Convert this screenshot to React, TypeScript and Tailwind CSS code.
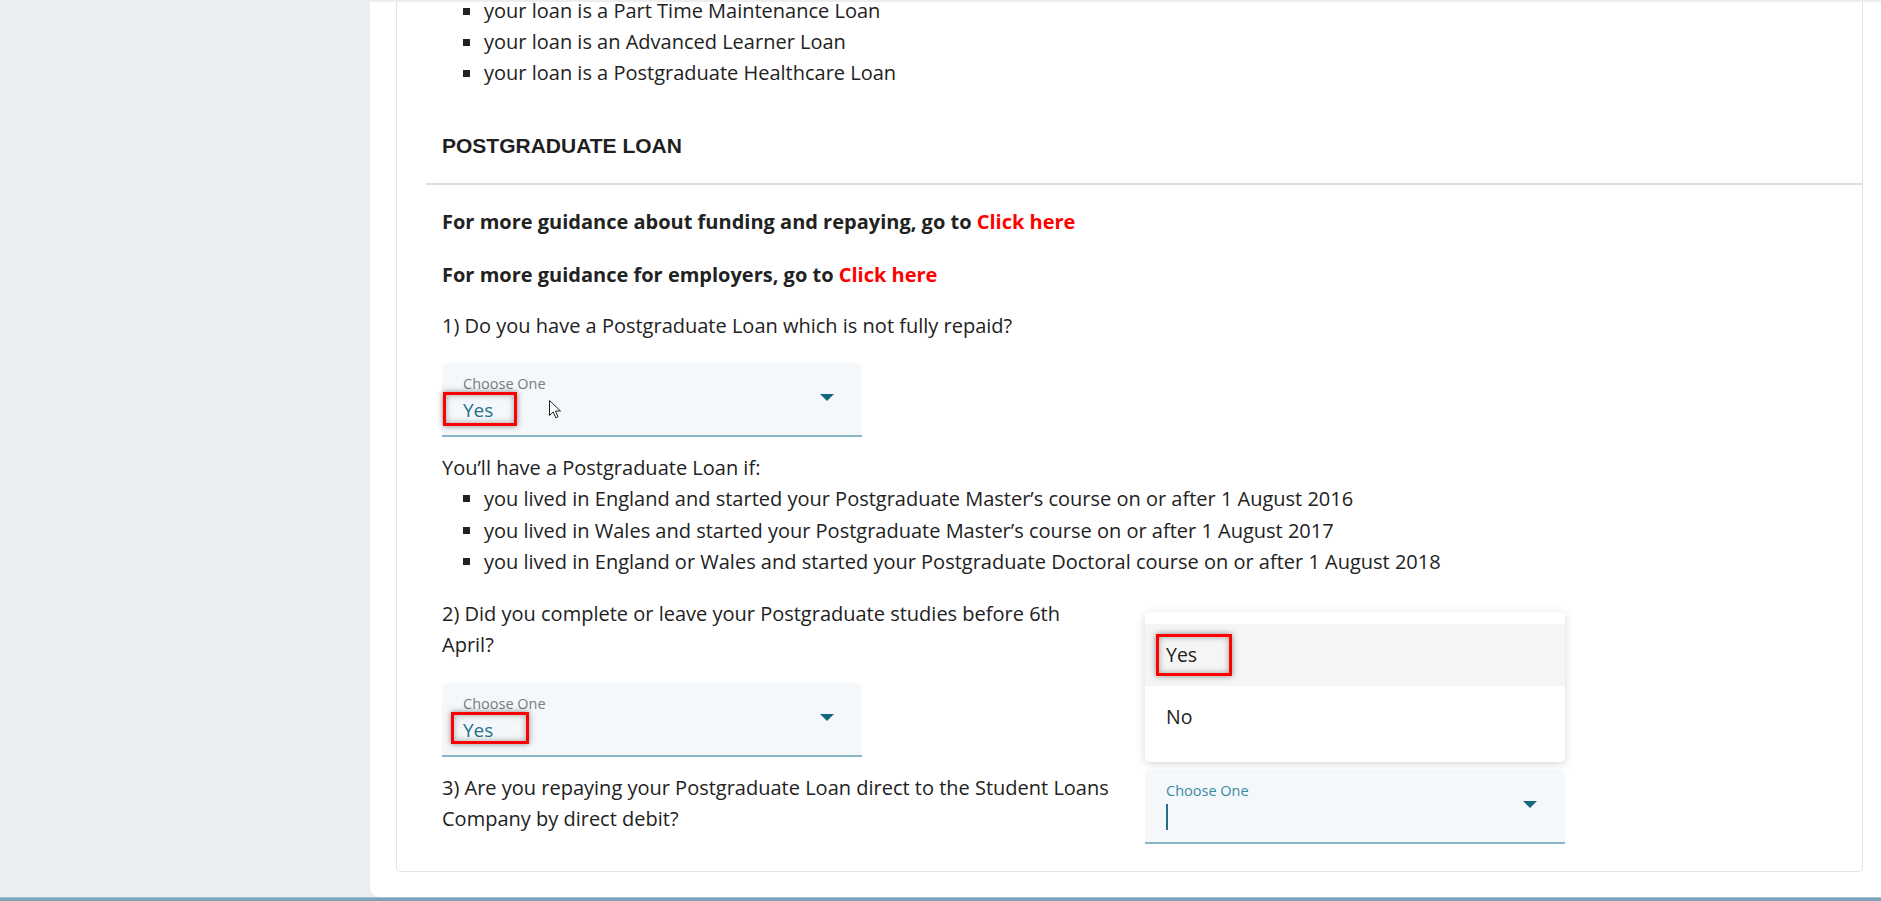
import type { ReactNode } from "react";

const TOP_BULLETS = [
  "your loan is a Part Time Maintenance Loan",
  "your loan is an Advanced Learner Loan",
  "your loan is a Postgraduate Healthcare Loan",
];

const PG_BULLETS = [
  "you lived in England and started your Postgraduate Master’s course on or after 1 August 2016",
  "you lived in Wales and started your Postgraduate Master’s course on or after 1 August 2017",
  "you lived in England or Wales and started your Postgraduate Doctoral course on or after 1 August 2018",
];

function Bullets({ items, className = "" }: { items: string[]; className?: string }) {
  return (
    <ul className={"pl-[21px] " + className}>
      {items.map((t) => (
        <li key={t} className="flex items-center gap-[14px]">
          <span className="size-[7px] shrink-0 bg-[#222]" />
          <span>{t}</span>
        </li>
      ))}
    </ul>
  );
}

// red annotation frame drawn over the screenshot
function Callout({ className }: { className: string }) {
  return (
    <span
      className={
        "pointer-events-none absolute border-[3px] border-[#ff0000] shadow-[0_0_6px_rgba(0,0,0,0.45),inset_0_0_6px_rgba(0,0,0,0.35)] " +
        className
      }
    />
  );
}

function Caret() {
  return <span className="block h-[26px] w-[1.5px] bg-[#2a6d86]" />;
}

function Select({
  value,
  focused,
  children,
}: {
  value?: string;
  focused?: boolean;
  children?: ReactNode;
}) {
  return (
    <div className="relative flex h-[74px] w-[420px] items-center rounded-t-[5px] border-b-2 border-[#86b5c6] bg-[#f4f8fb] pl-[21px] pr-[28px]">
      <div className="flex-1 self-start pt-[12px]">
        <div
          className={
            focused
              ? "text-[14.5px] leading-[18px] text-[#3a8aa2]"
              : "text-[14.5px] leading-[18px] text-[#7b7b7b]"
          }
        >
          Choose One
        </div>
        <div className="mt-[4px] h-[26px] text-[19px] leading-[26px] text-[#23708c]">
          {value ?? <Caret />}
        </div>
      </div>
      <svg width="14" height="7" viewBox="0 0 14 7" className="mb-[2px]">
        <path d="M0 0h14L7 7z" fill="#18667f" />
      </svg>
      {children}
    </div>
  );
}

function Pointer() {
  return (
    <svg
      width="13"
      height="19"
      viewBox="0 0 13 19"
      className="pointer-events-none absolute left-[107px] top-[37px]"
    >
      <path
        d="M0.5 0.5V15.5L4.2 11.9L6.8 17.8L9 16.8L6.5 11H11.5Z"
        fill="#fff"
        stroke="#222"
        strokeWidth="1"
        strokeLinejoin="round"
      />
    </svg>
  );
}

export default function App() {
  return (
    <div className="flex h-[901px] w-full flex-col overflow-hidden bg-[#eaeef3] font-['Open_Sans',sans-serif] text-[20px] leading-[31.5px] text-[#222]">
      <div className="flex min-h-0 flex-1">
        <div className="w-[370px] shrink-0" />
        <main className="flex-1 overflow-hidden rounded-bl-[10px] border-t-2 border-[#eeeeee] bg-white pl-[26px] pr-[18px]">
          <section className="rounded-b-[5px] border-x border-b border-[#e2e2e2] pb-[27px]">
            {/* tail of the previous section, scrolled mostly out of view */}
            <div className="-mt-[2px] pl-[45px]">
              <Bullets items={TOP_BULLETS} className="flex flex-col gap-[9px] leading-[22px]" />
            </div>

            <h2 className="ml-[29px] mt-[50px] border-b-2 border-[#dedede] pb-[25px] pl-[16px] font-['Liberation_Sans',Arial,sans-serif] text-[21px] font-bold leading-[24px] text-[#1e1e1e]">
              POSTGRADUATE LOAN
            </h2>

            <div className="pl-[45px]">
              <p className="mt-[21px] font-bold">
                For more guidance about funding and repaying, go to{" "}
                <a className="text-[#ff0000]">Click here</a>
              </p>
              <p className="mt-[21px] font-bold">
                For more guidance for employers, go to <a className="text-[#ff0000]">Click here</a>
              </p>

              <p className="mt-[20px]">1) Do you have a Postgraduate Loan which is not fully repaid?</p>
              <div className="mt-[21px]">
                <Select value="Yes">
                  <Callout className="left-[1px] top-[29px] h-[34px] w-[74px]" />
                  <Pointer />
                </Select>
              </div>

              <p className="mt-[15px]">You’ll have a Postgraduate Loan if:</p>
              <Bullets items={PG_BULLETS} />

              <p className="mt-[20px] w-[670px]">
                2) Did you complete or leave your Postgraduate studies before 6th April?
              </p>
              <div className="mt-[22px]">
                <Select value="Yes">
                  <Callout className="left-[9px] top-[29px] h-[32px] w-[78px]" />
                </Select>
              </div>

              <div className="mt-[13px] grid grid-cols-[670px_420px] gap-x-[33px]">
                <p className="pt-[2px]">
                  3) Are you repaying your Postgraduate Loan direct to the Student Loans Company by
                  direct debit?
                </p>
                <Select focused>
                  <div className="absolute bottom-[calc(100%+8px)] left-0 w-full rounded-[5px] bg-white pb-[14px] pt-[12px] shadow-[0_2px_10px_rgba(0,0,0,0.16)]">
                    <div className="relative flex h-[62px] items-center bg-[#f5f5f5] pl-[21px] text-[19.5px]">
                      Yes
                      <Callout className="left-[11px] top-[10px] h-[42px] w-[76px]" />
                    </div>
                    <div className="flex h-[62px] items-center pl-[21px] text-[19.5px]">No</div>
                  </div>
                </Select>
              </div>
            </div>
          </section>
        </main>
      </div>
      <div className="h-[4px] shrink-0 border-t border-[#a7c1d1] bg-[#7aa3bc]" />
    </div>
  );
}
